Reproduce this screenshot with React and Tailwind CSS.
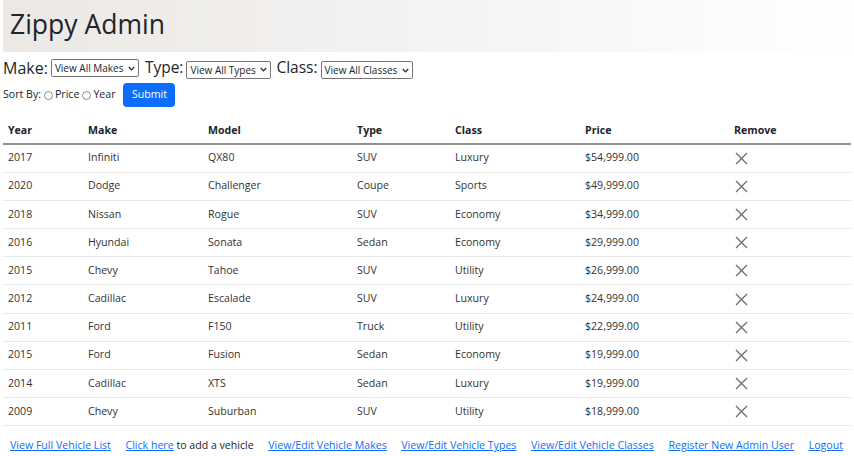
import React from "react";

const rows = [
  ["2017", "Infiniti", "QX80", "SUV", "Luxury", "$54,999.00"],
  ["2020", "Dodge", "Challenger", "Coupe", "Sports", "$49,999.00"],
  ["2018", "Nissan", "Rogue", "SUV", "Economy", "$34,999.00"],
  ["2016", "Hyundai", "Sonata", "Sedan", "Economy", "$29,999.00"],
  ["2015", "Chevy", "Tahoe", "SUV", "Utility", "$26,999.00"],
  ["2012", "Cadillac", "Escalade", "SUV", "Luxury", "$24,999.00"],
  ["2011", "Ford", "F150", "Truck", "Utility", "$22,999.00"],
  ["2015", "Ford", "Fusion", "Sedan", "Economy", "$19,999.00"],
  ["2014", "Cadillac", "XTS", "Sedan", "Luxury", "$19,999.00"],
  ["2009", "Chevy", "Suburban", "SUV", "Utility", "$18,999.00"],
];

function XIcon() {
  return (
    <svg width="13" height="13" viewBox="0 0 13 13" className="block">
      <path d="M1 1 L12 12 M12 1 L1 12" stroke="#6c6c6c" strokeWidth="1.3" fill="none" />
    </svg>
  );
}

function Radio() {
  return <span className="inline-block w-[9px] h-[9px] rounded-full border border-[#8a8a8a] bg-white ml-[3px] mr-[2px]" />;
}

function Select({ label, className }) {
  return (
    <span className={"ml-[3px] h-[18px] border border-[#767676] rounded-[2px] bg-white flex items-center justify-between pl-[3px] pr-[3px] text-[10px] leading-none " + className}>
      <span className="whitespace-nowrap">{label}</span>
      <svg width="7" height="5" viewBox="0 0 7 5" className="block ml-[2px]">
        <path d="M0.8 1 L3.5 3.8 L6.2 1" stroke="#222" strokeWidth="1.2" fill="none" />
      </svg>
    </span>
  );
}

export default function App() {
  return (
    <div className="w-[854px] h-[456px] bg-white text-[#212529] px-[3px] overflow-hidden" style={{ fontFamily: '"Open Sans", sans-serif' }}>
      <div className="h-[52px] bg-gradient-to-r from-[#ebe8e5] to-[#ffffff] flex items-center pl-[7px]">
        <h1 className="text-[26.5px] leading-none text-[#212529] font-normal pb-[3px]">Zippy Admin</h1>
      </div>
      <div className="flex items-center h-[28px] mt-[2px] text-[16px] leading-none">
        <span>Make:</span>
        <Select label="View All Makes" className="w-[88px]" />
        <span className="ml-[6px] text-[15.5px]">Type:</span>
        <Select label="View All Types" className="w-[85px] mt-[3px]" />
        <span className="ml-[5px] text-[15.5px]">Class:</span>
        <Select label="View All Classes" className="w-[92px] mt-[4px]" />
      </div>
      <div className="flex items-center text-[10.6px] h-[26px]">
        <span>Sort By:</span>
        <Radio />
        <span>Price</span>
        <Radio />
        <span>Year</span>
        <button className="ml-[8px] w-[52px] h-[24px] bg-[#0d6efd] text-white rounded-[4px] text-[10.6px]">Submit</button>
      </div>
      <table className="mt-[10px] w-[848px] text-[10.6px] border-collapse table-fixed">
        <colgroup>
          <col className="w-[80px]" />
          <col className="w-[120px]" />
          <col className="w-[149px]" />
          <col className="w-[98px]" />
          <col className="w-[130px]" />
          <col className="w-[149px]" />
          <col className="w-[122px]" />
        </colgroup>
        <thead>
          <tr className="h-[26px] border-b-2 border-[#8f8f8f]">
            {["Year", "Make", "Model", "Type", "Class", "Price", "Remove"].map((h) => (
              <th key={h} className="text-left font-bold pl-[5px] align-middle">{h}</th>
            ))}
          </tr>
        </thead>
        <tbody>
          {rows.map((r, i) => (
            <tr key={i} className="h-[28.2px] border-b border-[#e6e6e6] text-[#333]">
              {r.map((c, j) => (
                <td key={j} className="pl-[5px] align-middle">{c}</td>
              ))}
              <td className="pl-[6px] align-middle"><XIcon /></td>
            </tr>
          ))}
        </tbody>
      </table>
      <div className="flex justify-between pl-[7px] pr-[8px] mt-[12px] text-[10.6px]">
        <a className="text-[#0d6efd] underline">View Full Vehicle List</a>
        <span><a className="text-[#0d6efd] underline">Click here</a> to add a vehicle</span>
        <a className="text-[#0d6efd] underline">View/Edit Vehicle Makes</a>
        <a className="text-[#0d6efd] underline">View/Edit Vehicle Types</a>
        <a className="text-[#0d6efd] underline">View/Edit Vehicle Classes</a>
        <a className="text-[#0d6efd] underline">Register New Admin User</a>
        <a className="text-[#0d6efd] underline">Logout</a>
      </div>
    </div>
  );
}
